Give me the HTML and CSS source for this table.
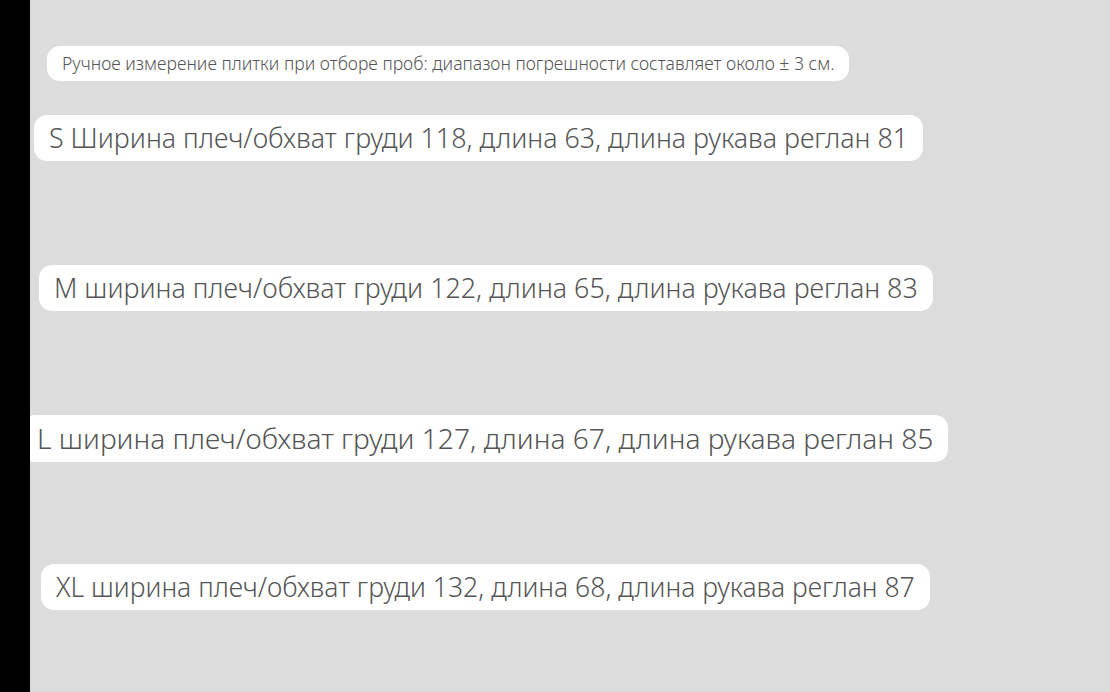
FILE: index.html
```html
<!DOCTYPE html>
<html lang="en">
<head>
    <meta charset="UTF-8">
    <title>Размеры</title>
    <link rel="stylesheet" href="styles.css">
</head>
<body>
    <div class="strip"></div>
    <div class="sheet">
        <div class="note">Ручное измерение плитки при отборе проб: диапазон погрешности составляет около ± 3 см.</div>
        <div class="size size-s">S Ширина плеч/обхват груди 118, длина 63, длина рукава реглан 81</div>
        <div class="size size-m">M ширина плеч/обхват груди 122, длина 65, длина рукава реглан 83</div>
        <div class="size size-l">L ширина плеч/обхват груди 127, длина 67, длина рукава реглан 85</div>
        <div class="size size-xl">XL ширина плеч/обхват груди 132, длина 68, длина рукава реглан 87</div>
    </div>
</body>
</html>
```
FILE: styles.css
```css
html, body {
    margin: 0;
    height: 100%;
}

body {
    display: flex;
    font-family: "Noto Sans", "Open Sans", sans-serif;
    font-weight: 350;
    color: #555555;
    background: #dcdcdc;
    overflow: hidden;
}

.strip {
    width: 30px;
    background: #000000;
    flex-shrink: 0;
}

.sheet {
    flex: 1;
    display: flex;
    flex-direction: column;
    align-items: flex-start;
    overflow: hidden;
}

.note {
    margin-top: 46px;
    margin-left: 17px;
    height: 35px;
    line-height: 35px;
    padding: 0 15px;
    background: #ffffff;
    border-radius: 13px;
    font-size: 17.6px;
    white-space: nowrap;
}

.size {
    height: 46px;
    line-height: 46px;
    padding: 0 15px;
    background: #ffffff;
    border-radius: 13px;
    font-size: 26.84px;
    white-space: nowrap;
}

.size-s {
    margin-top: 34px;
    margin-left: 4px;
}

.size-m {
    margin-top: 104px;
    margin-left: 9px;
}

.size-l {
    margin-top: 104px;
    margin-left: -8px;
    height: 47px;
    line-height: 47px;
    font-size: 28.17px;
}

.size-xl {
    margin-top: 102px;
    margin-left: 11px;
    font-size: 26.53px;
}
```
